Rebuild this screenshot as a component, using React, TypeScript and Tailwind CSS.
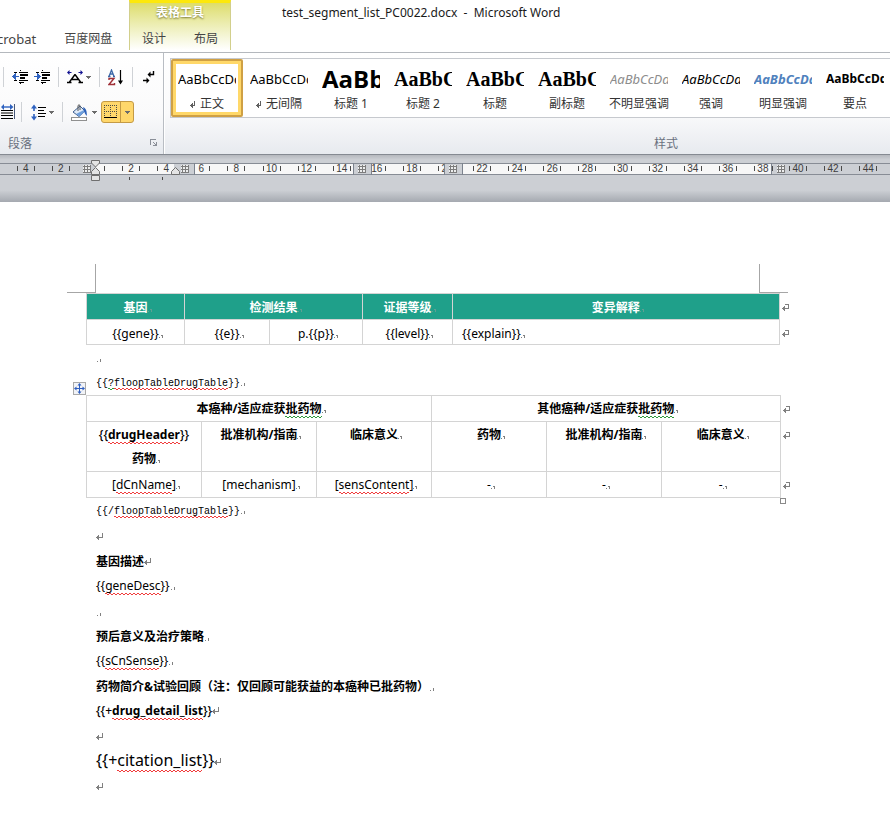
import type { ReactNode } from "react";

const UI_FONT = "font-['Noto_Sans','Noto_Sans_CJK_SC',sans-serif]";

/* ---------- text marks ---------- */

function CellMark({ light = false }: { light?: boolean }) {
  return (
    <span className="inline-block w-0 overflow-visible align-baseline">
      <svg className={light ? "overflow-visible text-[#5f9f93]" : "overflow-visible text-[#808080]"} width="5" height="5" viewBox="0 0 5 5" shapeRendering="crispEdges" aria-hidden="true">
        <path d="M0 4h1v1h-1zM2 2h2v3h-1v-2h-1z" fill="currentColor" />
      </svg>
    </span>
  );
}

function LineMark() {
  return (
    <svg className="inline-block align-baseline text-[#808080]" width="6" height="5" viewBox="0 0 6 5" shapeRendering="crispEdges" aria-hidden="true">
      <path d="M1 4h1v1h-1zM4 2h1v3h-1z" fill="currentColor" />
    </svg>
  );
}

function ReturnMark() {
  return (
    <svg className="inline-block align-baseline" width="7" height="8" viewBox="0 0 7 8" shapeRendering="crispEdges" aria-hidden="true">
      <path d="M6 0h1v5h-1zM0 4h6v1h-6zM1 3h1v3h-1zM2 2h1v5h-1z" fill="#808080" />
    </svg>
  );
}

function RowEnd() {
  return (
    <td className="border-0 p-0 pl-0.5 align-top">
      <svg className="mt-2.5" width="8" height="8" viewBox="0 0 8 8" shapeRendering="crispEdges" aria-hidden="true">
        <path d="M3 0h4v1h-4zM6 0h1v5h-1zM0 4h6v1h-6zM1 3h1v3h-1zM2 2h1v5h-1z" fill="#808080" />
      </svg>
    </td>
  );
}

/* Spelling squiggle: two one-pixel dash rows, offset by half a period. */
const squiggle = "bg-[length:4px_1px,4px_1px] bg-[position:0_calc(100%-1px),0_100%] bg-repeat-x pb-px";

function Bad({ children }: { children: ReactNode }) {
  return (
    <span className={`${squiggle} bg-[image:linear-gradient(90deg,#f03c3c_50%,transparent_50%),linear-gradient(90deg,transparent_50%,#f03c3c_50%)]`}>
      {children}
    </span>
  );
}

function Odd({ children }: { children: ReactNode }) {
  return (
    <span className={`${squiggle} bg-[image:linear-gradient(90deg,#2f9a3c_50%,transparent_50%),linear-gradient(90deg,transparent_50%,#2f9a3c_50%)]`}>
      {children}
    </span>
  );
}

/* ---------- ribbon ---------- */

function Separator() {
  return <span className="h-5 w-px bg-[#cfd2d6]" />;
}

function Caret() {
  return (
    <svg width="5" height="3" viewBox="0 0 5 3" shapeRendering="crispEdges" aria-hidden="true">
      <path d="M0 0h5v1h-5zM1 1h3v1h-3zM2 2h1v1h-1z" fill="#6b6b6b" />
    </svg>
  );
}

function IndentIcon({ increase = false }: { increase?: boolean }) {
  return (
    <svg width="17" height="16" viewBox="0 0 17 16" shapeRendering="crispEdges" aria-hidden="true">
      <path d="M8 1h1v1h-1zM8 14h1v1h-1zM2 3h3v1h-3zM7 3h9v1h-9zM8 5h8v2h-8zM8 8h5v2h-5zM2 11h3v1h-3zM7 11h9v1h-9zM7 13h5v1h-5z" fill="#000" />
      {increase ? (
        <path d="M0 7h4v1h-4zM3 4h1v7h-1zM4 5h1v5h-1zM5 6h1v3h-1zM6 7h1v1h-1z" fill="#2f62c0" />
      ) : (
        <path d="M3 7h4v1h-4zM3 4h1v7h-1zM2 5h1v5h-1zM1 6h1v3h-1zM0 7h1v1h-1z" fill="#2f62c0" />
      )}
    </svg>
  );
}

function ScaleIcon() {
  return (
    <svg width="17" height="15" viewBox="0 0 17 15" aria-hidden="true">
      <path d="M0 2.500L2.500 0v2h2v1h-2v2zM16 2.500L13.500 0v2h-2v1h2v2z" fill="#101090" />
      <path d="M8 4.500L2.500 12M8 4.500L13.500 12M5 9.500h6M0 12.500h4.500M11.500 12.500h4.500" stroke="#000" strokeWidth="1.400" fill="none" />
    </svg>
  );
}

function SortIcon() {
  return (
    <svg width="16" height="17" viewBox="0 0 16 17" aria-hidden="true">
      <path d="M1 7.500L3.500 1L6 7.500M2 5h3M0 7.500h2.500M5 7.500h2" stroke="#3c68a8" strokeWidth="1.300" fill="none" />
      <path d="M1 11V9.500h5L1 15.500h5.500V14" stroke="#a03038" strokeWidth="1.400" fill="none" />
      <path d="M12.500 1v13" stroke="#000" strokeWidth="1.200" />
      <path d="M10 11.500h5l-2.500 4z" fill="#000" />
    </svg>
  );
}

function MarksIcon() {
  return (
    <svg width="12" height="13" viewBox="0 0 12 13" aria-hidden="true">
      <path d="M10.500 0v3.500H6M0 9.500h4" stroke="#000" strokeWidth="1.400" fill="none" />
      <path d="M4.500 3.500L7.500 0.500v6zM6.500 9.500L3.500 6.500v6z" fill="#000" />
    </svg>
  );
}

function DistributeIcon() {
  return (
    <svg width="14" height="16" viewBox="0 0 14 16" aria-hidden="true">
      <path d="M13.500 0v15" stroke="#4a5a7a" />
      <path d="M0 6.500h12M0 9h12M0 11.500h12M0 14.500h12" stroke="#000" strokeWidth="1.200" />
      <path d="M1 3h10" stroke="#2f62c0" strokeWidth="1.400" />
      <path d="M12.500 3L9 0v6zM0 3l3-3v6z" fill="#2f62c0" />
    </svg>
  );
}

function SpacingIcon() {
  return (
    <svg width="16" height="17" viewBox="0 0 16 17" aria-hidden="true">
      <path d="M3 2v5M3 10v5" stroke="#2f62c0" strokeWidth="1.600" />
      <path d="M3 0.500L0 4.500h6zM3 16.500l-3-4h6z" fill="#2f62c0" />
      <path d="M7 3.500h8M7 6.500h6M7 9.500h8M7 12.500h7" stroke="#000" strokeWidth="1.200" />
    </svg>
  );
}

function ShadingIcon() {
  return (
    <svg width="17" height="17" viewBox="0 0 17 17" aria-hidden="true">
      <path d="M2 8L9 2l5 5-6 5.500z" fill="#dfeaf8" stroke="#3f5f8f" />
      <path d="M7 7V1.500Q8 0 9 1.500V6" stroke="#555" fill="none" />
      <path d="M5 10l8-4 1.500 1-6 5.500z" fill="#6f9fdc" />
      <path d="M12 3q4 1 4 9q-2-1-3-5z" fill="#2f62b8" />
      <rect x="0.500" y="13.500" width="15" height="3" fill="#fff" stroke="#909090" />
    </svg>
  );
}

function BordersIcon() {
  return (
    <svg width="14" height="14" viewBox="0 0 14 14" shapeRendering="crispEdges" aria-hidden="true">
      <path d="M0 .5h13M0 6.500h13M.5 0v12M6.500 0v12M12.500 0v12" stroke="#4b4b45" strokeDasharray="1 1" />
      <path d="M0 12h13v1h-13z" fill="#000" />
    </svg>
  );
}

const toolButton = "flex h-5 items-center justify-center";

function ParagraphGroup() {
  return (
    <section aria-label="段落" className="flex w-[164px] shrink-0 flex-col border-r border-[#b9bdc3]">
      <div className="flex h-[48px] items-center gap-1.5 pl-[3px]">
        <Separator />
        <div className="flex gap-0.5">
          <button aria-label="减少缩进量" className={`${toolButton} w-5`}><IndentIcon /></button>
          <button aria-label="增加缩进量" className={`${toolButton} w-5`}><IndentIcon increase /></button>
        </div>
        <Separator />
        <button aria-label="中文版式" className={`${toolButton} w-7 gap-0.5`}><ScaleIcon /><Caret /></button>
        <Separator />
        <button aria-label="排序" className={`${toolButton} w-5`}><SortIcon /></button>
        <Separator />
        <button aria-label="显示编辑标记" className={`${toolButton} w-5`}><MarksIcon /></button>
      </div>
      <div className="flex h-[22px] items-center gap-1.5">
        <button aria-label="分散对齐" className={`${toolButton} w-[15px]`}><DistributeIcon /></button>
        <Separator />
        <button aria-label="行和段落间距" className={`${toolButton} w-7 gap-0.5`}><SpacingIcon /><Caret /></button>
        <Separator />
        <div className="flex items-center gap-[3px]">
          <button aria-label="底纹" className={`${toolButton} w-[29px] gap-1`}><ShadingIcon /><Caret /></button>
          <button aria-label="边框" className="flex h-[22px] w-[33px] items-center rounded-[3px] border border-[#c49a45] bg-[#ffd76b]">
            <span className="flex h-full flex-1 items-center justify-center border-r border-[#c49a45]"><BordersIcon /></span>
            <span className="flex w-3 justify-center"><Caret /></span>
          </button>
        </div>
      </div>
      <div className="flex h-[31px] items-end justify-between pr-1 pl-2 text-xs text-[#6a7180]">
        <span className="leading-5">段落</span>
        <button aria-label="段落设置" className="p-px pb-[7px]">
          <svg width="8" height="8" viewBox="0 0 8 8" shapeRendering="crispEdges" aria-hidden="true">
            <path d="M0 0h6v1h-5v5h-1zM3 3h1v1h-1zM4 4h1v1h-1zM7 3v4h-4v-1h2v-1h1v-2z" fill="#8a8f98" />
          </svg>
        </button>
      </div>
    </section>
  );
}

const styles = [
  { name: "正文", mark: true, sample: "AaBbCcDd", look: "text-[13px] text-black" },
  { name: "无间隔", mark: true, sample: "AaBbCcDd", look: "text-[13px] text-black" },
  { name: "标题 1", sample: "AaBb", look: "text-2xl font-bold text-black font-['Open_Sans',sans-serif]" },
  { name: "标题 2", sample: "AaBbC", look: "text-xl font-bold text-black font-['Liberation_Serif',serif]" },
  { name: "标题", sample: "AaBbC", look: "text-xl font-bold text-black font-['Liberation_Serif',serif]" },
  { name: "副标题", sample: "AaBbC", look: "text-xl font-bold text-black font-['Liberation_Serif',serif]" },
  { name: "不明显强调", sample: "AaBbCcDd", look: "text-[13px] italic text-[#8c8c8c]" },
  { name: "强调", sample: "AaBbCcDd", look: "text-[13px] italic text-black" },
  { name: "明显强调", sample: "AaBbCcDd", look: "text-[13px] font-bold italic text-[#4f81bd]" },
  { name: "要点", sample: "AaBbCcDd", look: "text-xs font-bold text-black" },
];

function StylesGroup() {
  return (
    <section aria-label="样式" className="flex w-[998px] shrink-0 flex-col border-l border-white pt-[5px] pl-[5px]">
      <div className="flex h-[60px] shrink-0 border border-[#c6c9ce] bg-white">
        {styles.map((s, i) => (
          <button
            key={s.name}
            aria-pressed={i === 0}
            className={
              i === 0
                ? "flex w-[72px] flex-col items-center justify-start gap-px rounded-[2px] border-2 border-[#cfa044] pt-1 shadow-[inset_0_0_0_3px_#ffd869]"
                : "flex w-[72px] flex-col items-center justify-start gap-px pt-1.5"
            }
          >
            <span className={`block h-7 w-[58px] overflow-hidden text-left whitespace-nowrap ${s.look}`}>
              <span className="block leading-7">{s.sample}</span>
            </span>
            <span className="flex items-center gap-1 text-xs leading-5 whitespace-nowrap text-[#333]">
              {s.mark && <ReturnSmall />}
              {s.name}
            </span>
          </button>
        ))}
      </div>
      <div className="pt-4 text-center text-xs leading-5 text-[#6a7180]">样式</div>
    </section>
  );
}

function ReturnSmall() {
  return (
    <svg width="6" height="7" viewBox="0 0 6 7" shapeRendering="crispEdges" aria-hidden="true">
      <path d="M4 0h1v5h-1zM0 4h5v1h-5zM1 3h1v3h-1zM2 2h1v5h-1z" fill="#606060" />
    </svg>
  );
}

function TitleBar() {
  return (
    <header className="flex h-[52px] text-xs text-[#444]">
      <nav aria-label="选项卡" className="flex w-[129px] items-end gap-7 pb-[3px] leading-5">
        <button className="-ml-[3px] text-[13px]">crobat</button>
        <button>百度网盘</button>
      </nav>
      <div className="flex h-[50px] w-[102px] flex-col border-x border-[#d2cf8c] border-t-3 border-t-[#fde80b] bg-linear-to-b from-[#dedd68] to-white">
        <span className="text-center leading-5 font-bold text-white [text-shadow:0_1px_2px_#77762f]">表格工具</span>
        <div className="flex justify-center gap-7 pt-1.5 leading-5">
          <button>设计</button>
          <button>布局</button>
        </div>
      </div>
      <h1 className="pt-[3px] pl-[51px] leading-5 whitespace-pre text-[#1a1a1a]">test_segment_list_PC0022.docx  -  Microsoft Word</h1>
    </header>
  );
}

/* ---------- ruler ---------- */

const STEP = 35.1;
const ORIGIN = 96;
const marks = Array.from({ length: 60 }, (_, i) => i - 2).filter((n) => n !== 0);
const whiteBands = [[95, 79], [195, 158], [372, 72], [463, 308]];
const hidden = (x: number) => [[76, 100], [168, 196], [353, 371], [448, 462], [774, 784]].some(([a, b]) => x > a && x < b);

function Grip({ x }: { x: number }) {
  return (
    <g transform={`translate(${x} 10)`}>
      <path d="M0 0h8v8h-8z" fill="#eceded" />
      <path d="M1.500 0v8M4.500 0v8M7.500 0v8M0 1.500h8M0 4.500h8M0 7.500h8" stroke="#7c7c7c" />
    </g>
  );
}

function Ruler() {
  return (
    <div className="h-[47px] overflow-hidden bg-linear-to-b from-[#b5b8be] via-[#cccfd4] via-10% to-[#cccfd4] to-75%">
      <div className="h-full bg-linear-to-b from-transparent from-75% to-[#a5a9b0]">
        <svg className="block h-full w-full" shapeRendering="crispEdges" role="img" aria-label="标尺">
          {whiteBands.map(([x, w]) => (
            <rect key={x} x={x} y="9" width={w} height="10" fill="#f7f7f7" />
          ))}
          {marks.map((n) => {
            const x = ORIGIN + n * STEP;
            return (
              <g key={n}>
                {!hidden(x) && (
                  <text x={x} y="17" textAnchor="middle" fontSize="10" fill="#3c3c3c" fontFamily="'Liberation Sans', sans-serif">
                    {Math.abs(n * 2)}
                  </text>
                )}
                {!hidden(x - 9) && <rect x={Math.round(x - 9)} y="11" width="1" height="5" fill="#4a4a4a" />}
                {!hidden(x + 9) && <rect x={Math.round(x + 8)} y="11" width="1" height="5" fill="#4a4a4a" />}
              </g>
            );
          })}
          <rect x="445" y="9" width="17" height="10" fill="#cccfd4" />
          <path d="M0 8.500h4000M0 19.500h4000" stroke="#878c95" />
          <path d="M194.500 8v12M353.500 8v12M371.500 8v12M444.500 8v12M462.500 8v12M771.500 8v12" stroke="#7b828d" />
          <path d="M104 11h1v5h-1zM772 11h1v5h-1zM129 22h1v3h-1zM162 22h1v3h-1z" fill="#4a4a4a" />
          <Grip x={83} />
          <Grip x={181} />
          <Grip x={358} />
          <Grip x={449} />
          <Grip x={777} />
          <g shapeRendering="auto" fill="#e4e4e4" stroke="#6f6f6f">
            <path d="M91.500 5.500h8v2.500l-4 4-4-4z" />
            <path d="M91.500 19.500v-3l4-4 4 4v3z" />
            <path d="M91.500 20.500h8v5h-8z" />
            <path d="M171.500 19.500v-3l4-4 4 4v3z" />
          </g>
        </svg>
      </div>
    </div>
  );
}

/* ---------- document ---------- */

const geneCell = "border border-[#d4d4d4] p-0 pt-[3px] text-center align-top";
const geneHead = `${geneCell} bg-[#1fa08a]`;
const cell = "border border-[#d4d4d4] p-0 pt-px text-center align-top";

function GeneTable() {
  return (
    <table className="w-full table-fixed border-collapse leading-[21px]">
      <colgroup>
        <col className="w-[98px]" />
        <col className="w-[85px]" />
        <col className="w-[93px]" />
        <col className="w-[90px]" />
        <col />
        <col className="w-3.5" />
      </colgroup>
      <thead>
        <tr className="h-[26px] text-white">
          <th scope="col" className={geneHead}>基因<CellMark light /></th>
          <th scope="col" colSpan={2} className={geneHead}>检测结果<CellMark light /></th>
          <th scope="col" className={geneHead}>证据等级<CellMark light /></th>
          <th scope="col" className={geneHead}>变异解释<CellMark light /></th>
          <RowEnd />
        </tr>
      </thead>
      <tbody>
        <tr className="h-[25px]">
          <td className={geneCell}>{"{{gene}}"}<CellMark /></td>
          <td className={geneCell}>{"{{e}}"}<CellMark /></td>
          <td className={geneCell}>{"p.{{p}}"}<CellMark /></td>
          <td className={geneCell}>{"{{level}}"}<CellMark /></td>
          <td className="border border-[#d4d4d4] p-0 pt-[3px] pl-[9px] align-top">{"{{explain}}"}<CellMark /></td>
          <RowEnd />
        </tr>
      </tbody>
    </table>
  );
}

function DrugTable() {
  return (
    <div className="relative">
      <button aria-label="移动表格" className="absolute -top-[13px] -left-[13px] flex size-[13px] items-center justify-center border border-[#a9a9a9] bg-[#f1f3f7]">
        <svg width="11" height="11" viewBox="0 0 11 11" aria-hidden="true">
          <path d="M5.500 1v9M1 5.500h9" stroke="#2f5fc0" />
          <path d="M5.500 0l2 2.500h-4zM5.500 11l2-2.500h-4zM0 5.500l2.500-2v4zM11 5.500l-2.500-2v4z" fill="#2f5fc0" />
        </svg>
      </button>
      <table className="w-full table-fixed border-collapse leading-6">
        <colgroup>
          <col className="w-[115px]" />
          <col className="w-[115px]" />
          <col className="w-[115px]" />
          <col className="w-[115px]" />
          <col className="w-[115px]" />
          <col />
          <col className="w-[13px]" />
        </colgroup>
        <thead>
          <tr className="h-[26px]">
            <th scope="colgroup" colSpan={3} className={cell}>本癌种/适应症获<Odd>批药物</Odd><CellMark /></th>
            <th scope="colgroup" colSpan={3} className={cell}>其他癌种/适应症获<Odd>批药物</Odd><CellMark /></th>
            <RowEnd />
          </tr>
          <tr className="h-[50px]">
            <th scope="col" className={cell}><Plain>{"{{"}</Plain><Bad>drugHeader</Bad><Plain>{"}}"}</Plain><br />药物<CellMark /></th>
            <th scope="col" className={cell}>批准机构/指南<CellMark /></th>
            <th scope="col" className={cell}>临床意义<CellMark /></th>
            <th scope="col" className={cell}>药物<CellMark /></th>
            <th scope="col" className={cell}>批准机构/指南<CellMark /></th>
            <th scope="col" className={cell}>临床意义<CellMark /></th>
            <RowEnd />
          </tr>
        </thead>
        <tbody>
          <tr className="h-[26px]">
            <td className={cell}>[<Bad>dCnName</Bad>]<CellMark /></td>
            <td className={cell}>[mechanism]<CellMark /></td>
            <td className={cell}>[<Bad>sensContent</Bad>]<CellMark /></td>
            <td className={cell}>-<CellMark /></td>
            <td className={cell}>-<CellMark /></td>
            <td className={cell}>-<CellMark /></td>
            <RowEnd />
          </tr>
        </tbody>
      </table>
      <span className="absolute right-[7px] -bottom-1.5 size-1.5 border border-[#8a8a8a] bg-white" />
    </div>
  );
}

function Plain({ children }: { children: ReactNode }) {
  return <span className="font-medium">{children}</span>;
}

function Line({ children, className = "leading-[25px]" }: { children: ReactNode; className?: string }) {
  return <p className={`h-[25px] pl-2.5 whitespace-nowrap ${className}`}>{children}</p>;
}

const heading = "leading-[27px] font-bold";
const mono = "font-['Liberation_Mono',monospace] text-[10px] leading-[27px]";

function Page() {
  return (
    <main className="bg-white pt-[62px] pb-8 text-xs text-black">
      <div className="mr-[102px] ml-[67px] flex h-[29px] justify-between">
        <span className="w-[29px] border-r border-b border-[#a6a6a6]" />
        <span className="w-[29px] border-b border-l border-[#a6a6a6]" />
      </div>
      <div className="pr-[97px] pl-[86px]">
        <GeneTable />
        <Line><LineMark /></Line>
        <Line className={mono}>{"{{"}<Odd>?</Odd><Bad>floopTableDrugTable</Bad>{"}}"}<LineMark /></Line>
        <DrugTable />
        <Line className={mono}>{"{{/"}<Bad>floopTableDrugTable</Bad>{"}}"}<LineMark /></Line>
        <Line className="leading-[27px]"><ReturnMark /></Line>
        <Line className={heading}>基因描述<ReturnMark /></Line>
        <Line>{"{{"}<Bad>geneDesc</Bad>{"}}"}<LineMark /></Line>
        <Line className="leading-[27px]"><LineMark /></Line>
        <Line className={heading}>预后意义及治疗策略<LineMark /></Line>
        <Line>{"{{"}<Bad>sCnSense</Bad>{"}}"}<LineMark /></Line>
        <Line className={heading}>药物简介&试验回顾（注：仅回顾可能获益的本癌种已批药物）<LineMark /></Line>
        <Line className="leading-[25px] font-bold"><Plain>{"{{+"}</Plain><Bad>drug_detail_list</Bad><Plain>{"}}"}</Plain><ReturnMark /></Line>
        <Line className="leading-[27px]"><ReturnMark /></Line>
        <Line className="text-base leading-[25px]">{"{{+"}<Bad>citation_list</Bad>{"}}"}<ReturnMark /></Line>
        <Line className="leading-[27px]"><ReturnMark /></Line>
      </div>
    </main>
  );
}

export default function App() {
  return (
    <div className={`min-h-screen overflow-hidden bg-white ${UI_FONT}`}>
      <TitleBar />
      <div className="flex h-[103px] overflow-hidden border-t border-b border-t-[#b4b8bd] border-b-[#858a92] bg-linear-to-b from-white via-[#fafafb] via-60% to-[#e7eaef]">
        <ParagraphGroup />
        <StylesGroup />
      </div>
      <Ruler />
      <Page />
    </div>
  );
}
